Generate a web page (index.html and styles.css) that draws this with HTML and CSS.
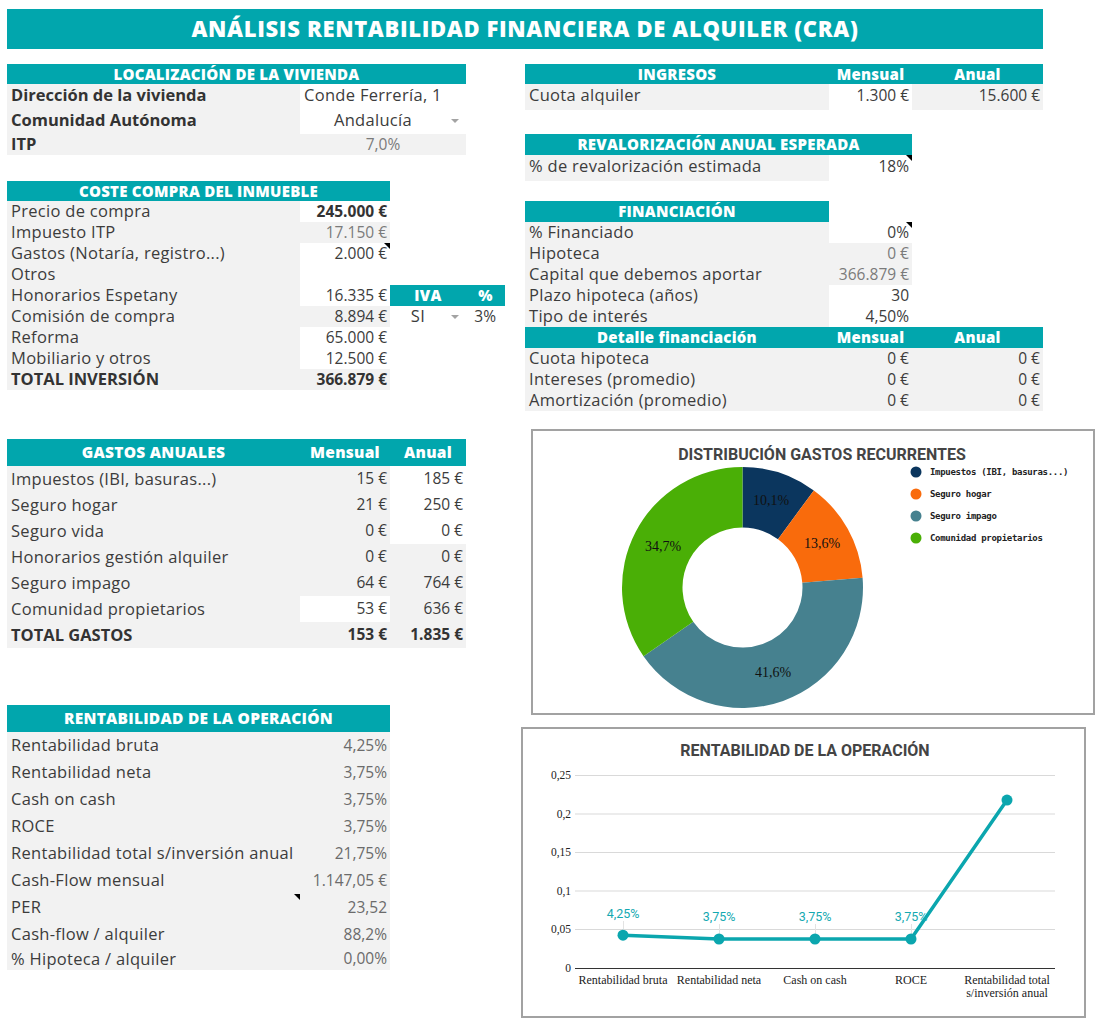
FILE: index.html
```html
<!DOCTYPE html>
<html lang="es">
<head>
<meta charset="utf-8">
<title>Análisis rentabilidad</title>
<link rel="stylesheet" href="styles.css">
</head>
<body>
<div class="page">
  <h1 class="title">ANÁLISIS RENTABILIDAD FINANCIERA DE ALQUILER (CRA)</h1>

  <div class="top">
    <!-- r1 -->
    <div class="c h s3">LOCALIZACIÓN DE LA VIVIENDA</div><div></div><div></div>
    <div class="c h">INGRESOS</div><div class="c h">Mensual</div><div class="c h">Anual</div>
    <!-- r2 -->
    <div class="c g b t">Dirección de la vivienda</div><div class="c w s2 t">Conde Ferrería, 1</div><div></div><div></div>
    <div class="c g t">Cuota alquiler</div><div class="c w r t">1.300 €</div><div class="c g r t">15.600 €</div>
    <!-- r3 -->
    <div class="c g b t">Comunidad Autónoma</div><div class="c w s2 dd t"><span class="ddt">Andalucía</span><span class="arrow"></span></div><div></div><div></div>
    <div></div><div></div><div></div>
    <!-- r4 -->
    <div class="c g b">ITP</div><div class="c g s2 ctr m">7,0%</div><div></div><div></div>
    <div class="c h s2">REVALORIZACIÓN ANUAL ESPERADA</div><div></div>
    <!-- r5 -->
    <div></div><div></div><div></div><div></div><div></div>
    <div class="c g t">% de revalorización estimada</div><div class="c w r tri t">18%</div><div></div>
    <!-- r6 -->
    <div class="c h s2">COSTE COMPRA DEL INMUEBLE</div><div></div><div></div><div></div>
    <div></div><div></div><div></div>
    <!-- r7 -->
    <div class="c g">Precio de compra</div><div class="c w r b">245.000 €</div><div></div><div></div><div></div>
    <div class="c h">FINANCIACIÓN</div><div></div><div></div>
    <!-- r8 -->
    <div class="c g">Impuesto ITP</div><div class="c g r m">17.150 €</div><div></div><div></div><div></div>
    <div class="c g">% Financiado</div><div class="c w r tri">0%</div><div></div>
    <!-- r9 -->
    <div class="c g">Gastos (Notaría, registro...)</div><div class="c w r tri">2.000 €</div><div></div><div></div><div></div>
    <div class="c g">Hipoteca</div><div class="c g r m">0 €</div><div></div>
    <!-- r10 -->
    <div class="c g">Otros</div><div class="c w"></div><div></div><div></div><div></div>
    <div class="c g">Capital que debemos aportar</div><div class="c g r m">366.879 €</div><div></div>
    <!-- r11 -->
    <div class="c g">Honorarios Espetany</div><div class="c w r">16.335 €</div><div class="c h">IVA</div><div class="c h">%</div><div></div>
    <div class="c g">Plazo hipoteca (años)</div><div class="c w r">30</div><div></div>
    <!-- r12 -->
    <div class="c g">Comisión de compra</div><div class="c g r">8.894 €</div><div class="c w dd"><span class="ddt">SI</span><span class="arrow"></span></div><div class="c w r pr">3%</div><div></div>
    <div class="c g">Tipo de interés</div><div class="c w r">4,50%</div><div></div>
    <!-- r13 -->
    <div class="c g">Reforma</div><div class="c w r">65.000 €</div><div></div><div></div><div></div>
    <div class="c h">Detalle financiación</div><div class="c h">Mensual</div><div class="c h">Anual</div>
    <!-- r14 -->
    <div class="c g">Mobiliario y otros</div><div class="c w r">12.500 €</div><div></div><div></div><div></div>
    <div class="c g">Cuota hipoteca</div><div class="c g r">0 €</div><div class="c g r">0 €</div>
    <!-- r15 -->
    <div class="c g b">TOTAL INVERSIÓN</div><div class="c g r b">366.879 €</div><div></div><div></div><div></div>
    <div class="c g">Intereses (promedio)</div><div class="c g r">0 €</div><div class="c g r">0 €</div>
    <!-- r16 -->
    <div></div><div></div><div></div><div></div><div></div>
    <div class="c g">Amortización (promedio)</div><div class="c g r">0 €</div><div class="c g r">0 €</div>
  </div>

  <div class="bottom">
    <div class="left">
      <div class="gastos">
        <div class="c h hx">GASTOS ANUALES</div><div class="c h hx">Mensual</div><div class="c h hx">Anual</div>
        <div class="c g">Impuestos (IBI, basuras...)</div><div class="c g r">15 €</div><div class="c w r">185 €</div>
        <div class="c g">Seguro hogar</div><div class="c g r">21 €</div><div class="c w r">250 €</div>
        <div class="c g">Seguro vida</div><div class="c g r">0 €</div><div class="c w r">0 €</div>
        <div class="c g">Honorarios gestión alquiler</div><div class="c g r">0 €</div><div class="c g r">0 €</div>
        <div class="c g">Seguro impago</div><div class="c g r">64 €</div><div class="c g r">764 €</div>
        <div class="c g">Comunidad propietarios</div><div class="c w r">53 €</div><div class="c g r">636 €</div>
        <div class="c g b">TOTAL GASTOS</div><div class="c g r b">153 €</div><div class="c g r b">1.835 €</div>
      </div>

      <div class="rent">
        <div class="c h hx s2">RENTABILIDAD DE LA OPERACIÓN</div>
        <div class="c g">Rentabilidad bruta</div><div class="c g r m2">4,25%</div>
        <div class="c g">Rentabilidad neta</div><div class="c g r m2">3,75%</div>
        <div class="c g">Cash on cash</div><div class="c g r m2">3,75%</div>
        <div class="c g">ROCE</div><div class="c g r m2">3,75%</div>
        <div class="c g">Rentabilidad total s/inversión anual</div><div class="c g r m2">21,75%</div>
        <div class="c g">Cash-Flow mensual</div><div class="c g r m2">1.147,05 €</div>
        <div class="c g tri">PER</div><div class="c g r m2">23,52</div>
        <div class="c g">Cash-flow / alquiler</div><div class="c g r m2">88,2%</div>
        <div class="c g">% Hipoteca / alquiler</div><div class="c g r m2">0,00%</div>
      </div>
    </div>

    <div class="right">
      <div class="chart pie">
        <svg width="560" height="282" viewBox="0 0 560 282">
          <text class="ctitle" x="289" y="29" text-anchor="middle">DISTRIBUCIÓN GASTOS RECURRENTES</text>
          <path d="M209.5,36 A120.5,120.5 0 0 1 280.82,59.38 L245.01,108.14 A60,60 0 0 0 209.5,96.5 Z" fill="#0b365e"/>
          <path d="M280.82,59.38 A120.5,120.5 0 0 1 329.6,146.73 L269.3,151.64 A60,60 0 0 0 245.01,108.14 Z" fill="#f96b0c"/>
          <path d="M329.6,146.73 A120.5,120.5 0 0 1 110.52,225.22 L160.22,190.72 A60,60 0 0 0 269.3,151.64 Z" fill="#46818f"/>
          <path d="M110.52,225.22 A120.5,120.5 0 0 1 209.5,36 L209.5,96.5 A60,60 0 0 0 160.22,190.72 Z" fill="#4aaf06"/>
          <g class="plab" text-anchor="middle">
            <text x="238" y="74">10,1%</text>
            <text x="289" y="117">13,6%</text>
            <text x="240" y="246">41,6%</text>
            <text x="130" y="120">34,7%</text>
          </g>
          <g class="leg">
            <circle cx="383" cy="41" r="5.5" fill="#0b365e"/>
            <text x="397" y="44">Impuestos (IBI, basuras...)</text>
            <circle cx="383" cy="63" r="5.5" fill="#f96b0c"/>
            <text x="397" y="66">Seguro hogar</text>
            <circle cx="383" cy="85" r="5.5" fill="#46818f"/>
            <text x="397" y="88">Seguro impago</text>
            <circle cx="383" cy="107" r="5.5" fill="#4aaf06"/>
            <text x="397" y="110">Comunidad propietarios</text>
          </g>
        </svg>
      </div>

      <div class="chart line">
        <svg width="561" height="287" viewBox="0 0 561 287">
          <text class="ctitle" x="282" y="27" text-anchor="middle">RENTABILIDAD DE LA OPERACIÓN</text>
          <g stroke="#d9d9d9" stroke-width="1">
            <line x1="52" y1="46.5" x2="532" y2="46.5"/>
            <line x1="52" y1="85" x2="532" y2="85"/>
            <line x1="52" y1="123.5" x2="532" y2="123.5"/>
            <line x1="52" y1="162" x2="532" y2="162"/>
            <line x1="52" y1="200.5" x2="532" y2="200.5"/>
          </g>
          <line x1="52" y1="239.5" x2="532" y2="239.5" stroke="#333" stroke-width="1"/>
          <g class="ylab" text-anchor="end">
            <text x="48" y="50">0,25</text>
            <text x="48" y="89">0,2</text>
            <text x="48" y="127">0,15</text>
            <text x="48" y="166">0,1</text>
            <text x="48" y="204">0,05</text>
            <text x="48" y="243">0</text>
          </g>
          <g stroke="#e3e3e3" stroke-width="1">
            <line x1="100.5" y1="192" x2="100.5" y2="201"/>
            <line x1="196.5" y1="195" x2="196.5" y2="205"/>
            <line x1="292.5" y1="195" x2="292.5" y2="205"/>
            <line x1="388.5" y1="195" x2="388.5" y2="205"/>
          </g>
          <polyline points="100,206.2 196,210 292,210 388,210 484,71.1" fill="none" stroke="#0ba6ae" stroke-width="3.5" stroke-linejoin="round"/>
          <g fill="#0ba6ae">
            <circle cx="100" cy="206.2" r="5.5"/>
            <circle cx="196" cy="210" r="5.5"/>
            <circle cx="292" cy="210" r="5.5"/>
            <circle cx="388" cy="210" r="5.5"/>
            <circle cx="484" cy="71.1" r="5.5"/>
          </g>
          <g class="dlab" text-anchor="middle">
            <text x="100" y="189">4,25%</text>
            <text x="196" y="192">3,75%</text>
            <text x="292" y="192">3,75%</text>
            <text x="388" y="192">3,75%</text>
          </g>
          <g class="xlab" text-anchor="middle">
            <text x="100" y="255">Rentabilidad bruta</text>
            <text x="196" y="255">Rentabilidad neta</text>
            <text x="292" y="255">Cash on cash</text>
            <text x="388" y="255">ROCE</text>
            <text x="484" y="255">Rentabilidad total</text>
            <text x="484" y="268">s/inversión anual</text>
          </g>
        </svg>
      </div>
    </div>
  </div>
</div>
</body>
</html>
```
FILE: styles.css
```css
html, body {
  margin: 0;
  padding: 0;
  background: #ffffff;
}

body {
  font-family: "Open Sans", "Liberation Sans", sans-serif;
  color: #3c3c3c;
}

.page {
  padding: 9px 0 0 7px;
}

.title {
  margin: 0 0 15px 0;
  width: 1036px;
  height: 40px;
  box-sizing: border-box;
  padding-bottom: 3px;
  background: #01a6ad;
  color: #ffffff;
  font-size: 22px;
  font-weight: 800;
  display: flex;
  align-items: center;
  justify-content: center;
  letter-spacing: 0.65px;
}

.top {
  display: grid;
  grid-template-columns: 293px 90px 76px 39px 20px 304px 83px 131px;
  grid-template-rows: 20px 26px 24px 21px 26px 20px repeat(10, 21px);
}

.c {
  position: relative;
  display: flex;
  align-items: center;
  padding: 0 4px;
  white-space: nowrap;
  font-size: 16.5px;
  letter-spacing: 0.3px;
  line-height: 1;
  color: #3c3c3c;
  min-width: 0;
}

.g { background: #f2f2f2; }
.w { background: #ffffff; }
.r {
  justify-content: flex-end;
  padding-right: 3px;
  font-size: 15.5px;
  letter-spacing: 0;
}
.ctr { justify-content: center; font-size: 15.5px; letter-spacing: 0; }
.b { font-weight: 700; color: #333333; letter-spacing: 0; }
.m { color: #7b7b7b; }
.m2 { color: #6b6b6b; }
.pr { padding-right: 9px; }

.h {
  background: #01a6ad;
  color: #ffffff;
  font-weight: 800;
  font-size: 15px;
  letter-spacing: 0.25px;
  justify-content: center;
}

.s2 { grid-column: span 2; }
.s3 { grid-column: span 3; }

.dd { padding: 0; }
.t { padding-bottom: 3px; }

.ddt {
  flex: 1;
  text-align: center;
}
.arrow {
  width: 20px;
  height: 100%;
  display: flex;
  align-items: center;
  justify-content: center;
}
.arrow::before {
  content: "";
  border-left: 4px solid transparent;
  border-right: 4px solid transparent;
  border-top: 4px solid #a3a3a3;
  margin-left: -2px;
}

.tri::after {
  content: "";
  position: absolute;
  top: 0;
  right: 0;
  border-top: 6px solid #000000;
  border-left: 6px solid transparent;
}

.bottom {
  display: flex;
  align-items: flex-start;
}

.left {
  width: 459px;
  padding-top: 28px;
}

.gastos {
  display: grid;
  grid-template-columns: 293px 90px 76px;
  grid-template-rows: 27px repeat(7, 26px);
}

.rent {
  margin-top: 57px;
  width: 383px;
  display: grid;
  grid-template-columns: 293px 90px;
  grid-template-rows: 27px repeat(8, 27px) 22px;
}

.hx { font-size: 15.5px; }

.right {
  margin-left: 55px;
  padding-top: 18px;
  display: flex;
  flex-direction: column;
  align-items: flex-start;
}

.chart {
  border: 2px solid #a2a2a2;
  background: #ffffff;
}

.chart svg {
  display: block;
}

.pie {
  margin-left: 10px;
  width: 560px;
  height: 282px;
}

.line {
  margin-top: 12px;
  width: 561px;
  height: 287px;
}

.ctitle {
  font-family: Roboto, "Liberation Sans", sans-serif;
  font-weight: 700;
  font-size: 16px;
  fill: #444444;
}

.plab text {
  font-family: "Liberation Serif", serif;
  font-size: 14px;
  fill: #111111;
}

.leg text {
  font-family: "DejaVu Sans Mono", monospace;
  font-weight: 700;
  font-size: 9px;
  letter-spacing: -0.3px;
  fill: #222222;
}

.ylab text {
  font-family: "Liberation Serif", serif;
  font-size: 11.5px;
  fill: #222222;
}

.xlab text {
  font-family: "Liberation Serif", serif;
  font-size: 12px;
  fill: #222222;
}

.dlab text {
  font-family: Roboto, "Liberation Sans", sans-serif;
  font-size: 12.5px;
  fill: #14a9b1;
}
```
